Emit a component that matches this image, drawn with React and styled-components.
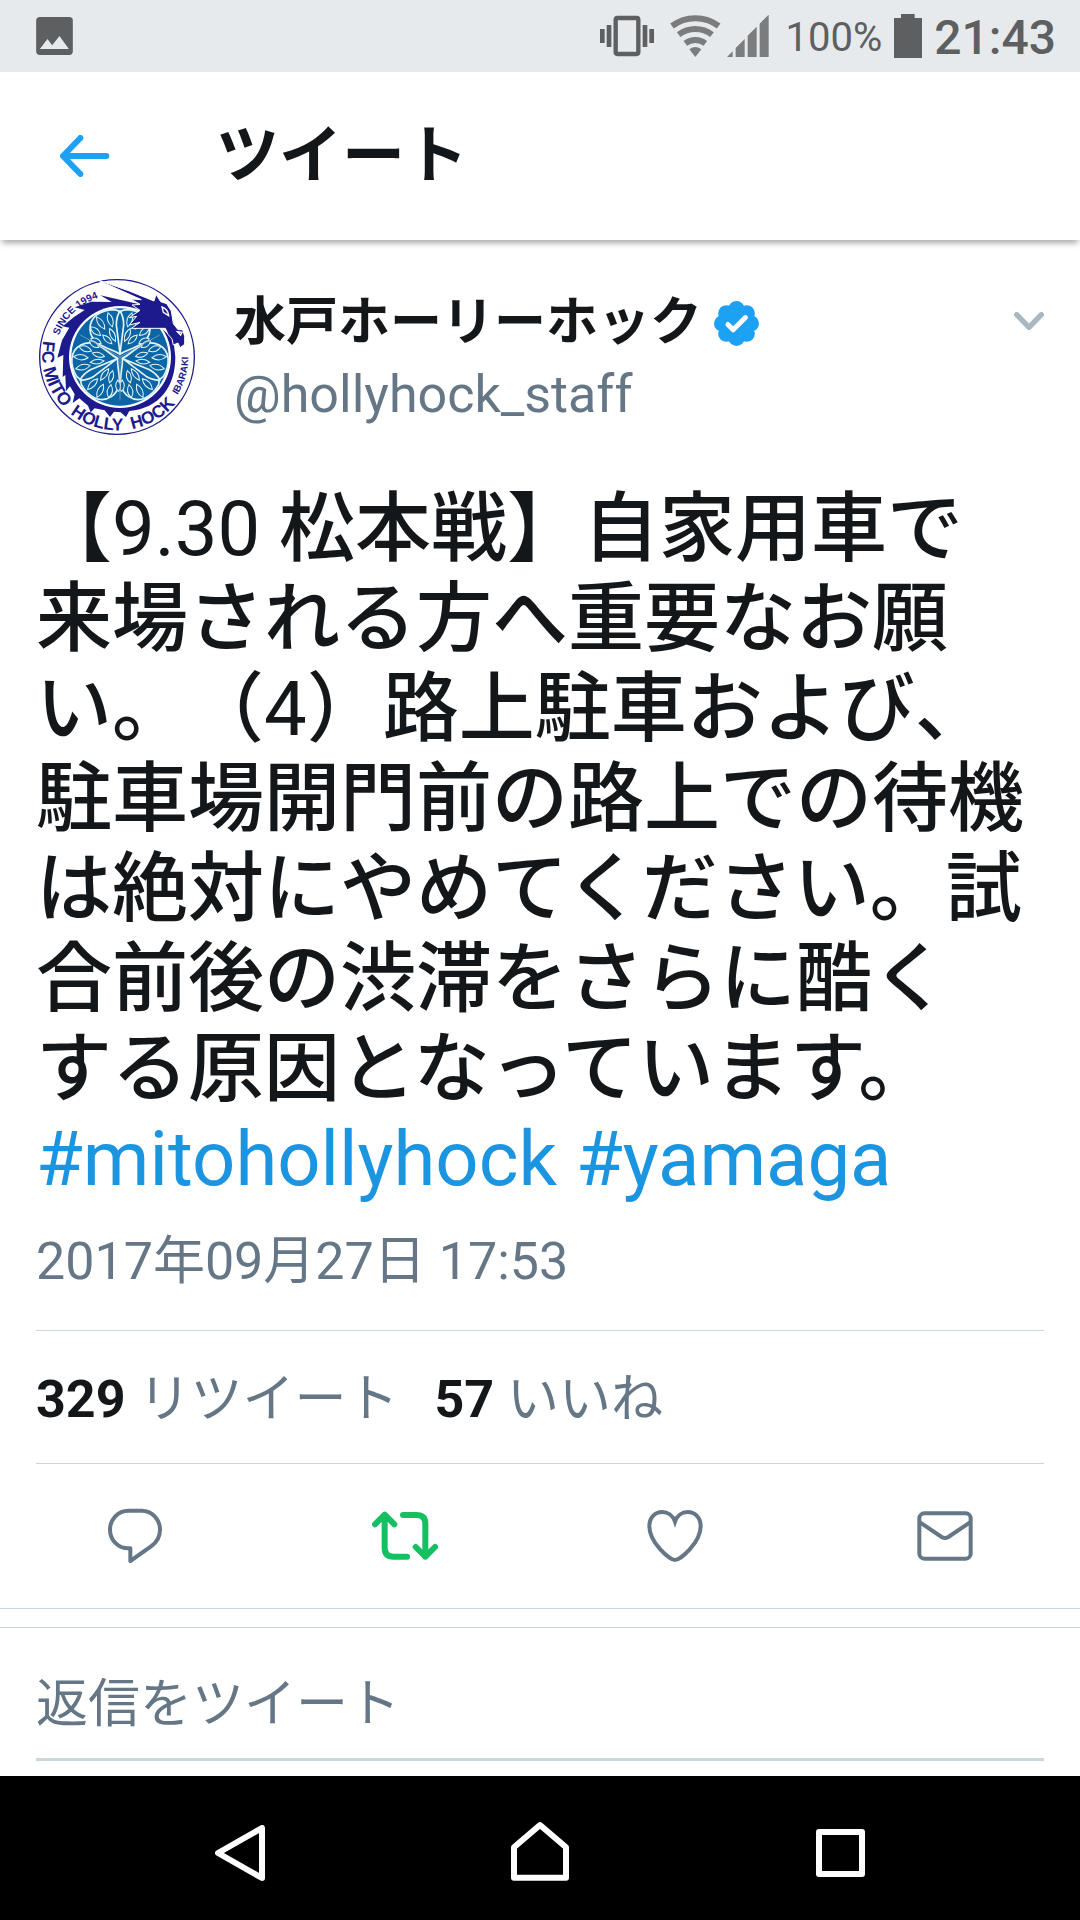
import React from 'react';
import styled, { createGlobalStyle } from 'styled-components';

const App = () => {
    return (
        <>
            <GlobalStyle />
            <Screen>
                <StatusBar />
                <TopBar>
                    <IconButton type="button" aria-label="戻る">
                        <BackArrow />
                    </IconButton>
                    <h1>ツイート</h1>
                </TopBar>
                <Main>
                    <Tweet />
                    <ReplyBox>
                        <input type="text" aria-label="返信をツイート" placeholder="返信をツイート" />
                    </ReplyBox>
                </Main>
                <SystemNav />
            </Screen>
        </>
    );
};

const StatusBar = () => (
    <StatusWrapper>
        <PhotoIcon />
        <StatusIcons $gap="16px">
            <VibrateIcon />
            <StatusIcons $gap="6px">
                <WifiIcon />
                <SignalIcon />
            </StatusIcons>
            <StatusIcons $gap="12px">
                <BatteryText>100%</BatteryText>
                <BatteryIcon />
                <Clock>21:43</Clock>
            </StatusIcons>
        </StatusIcons>
    </StatusWrapper>
);

const Tweet = () => (
    <article>
        <Author>
            <Crest />
            <div className="names">
                <div className="name">
                    <strong>水戸ホーリーホック</strong>
                    <VerifiedBadge />
                </div>
                <span className="handle">@hollyhock_staff</span>
            </div>
            <IconButton type="button" aria-label="メニュー">
                <Chevron />
            </IconButton>
        </Author>
        <TweetText>
            【9.30 松本戦】自家用車で
            <br />
            来場される方へ重要なお願
            <br />
            い。（4）路上駐車および、
            <br />
            駐車場開門前の路上での待機
            <br />
            は絶対にやめてください。試
            <br />
            合前後の渋滞をさらに酷く
            <br />
            する原因となっています。
            <br />
            <a href="#mitohollyhock">#mitohollyhock</a> <a href="#yamaga">#yamaga</a>
        </TweetText>
        <Timestamp>2017年09月27日 17:53</Timestamp>
        <Stats>
            <a href="#retweets">
                <strong>329</strong> リツイート
            </a>
            <a href="#likes">
                <strong>57</strong> いいね
            </a>
        </Stats>
        <Actions>
            <IconButton type="button" aria-label="返信">
                <ReplyIcon />
            </IconButton>
            <IconButton type="button" aria-label="リツイート">
                <RetweetIcon />
            </IconButton>
            <IconButton type="button" aria-label="いいね">
                <HeartIcon />
            </IconButton>
            <IconButton type="button" aria-label="ダイレクトメッセージ">
                <MailIcon />
            </IconButton>
        </Actions>
    </article>
);

const SystemNav = () => (
    <NavWrapper>
        <IconButton type="button" aria-label="Back">
            <svg width="50" height="56" viewBox="45 75 150 168" {...navStroke}>
                <path d="M186 84V234L54 159Z" />
            </svg>
        </IconButton>
        <IconButton type="button" aria-label="Home">
            <svg width="58" height="64" viewBox="933 64 174 192" {...navStroke}>
                <path d="M942 143L1020 76L1098 143V234H942Z" />
            </svg>
        </IconButton>
        <IconButton type="button" aria-label="Recents">
            <svg width="49" height="48" viewBox="108 87 147 144" {...navStroke}>
                <path d="M117 96H246V222H117Z" />
            </svg>
        </IconButton>
    </NavWrapper>
);

const navStroke = { fill: 'none', stroke: '#fff', strokeWidth: 18, strokeLinejoin: 'round' };

/* icons */

const PhotoIcon = () => (
    <svg width="37" height="38" viewBox="102 51 110 114">
        <rect x="102" y="51" width="110" height="114" rx="11" fill="#5d5f61" />
        <path d="M113 147L136 117L150 136L172 108L200 147Z" fill="#e6eaed" />
    </svg>
);

const VibrateIcon = () => (
    <svg width="54" height="42" viewBox="123 45 162 126" fill="#5d5f61">
        <rect x="170" y="54" width="68" height="108" rx="5" fill="none" stroke="#5d5f61" strokeWidth="13" />
        <path d="M123 87h14v42h-14zM143 75h14v66h-14zM251 75h14v66h-14zM271 87h14v42h-14z" />
    </svg>
);

const WifiIcon = () => (
    <svg width="51" height="42" viewBox="336 48 153 126" fill="none" stroke="#7a7c7e" strokeWidth="18">
        <path d="M342 81A116 116 0 0 1 482 81M362 107A83 83 0 0 1 462 107M382 133A50 50 0 0 1 442 133" />
        <path d="M412 174L394 151A30 30 0 0 1 430 151Z" fill="#7a7c7e" stroke="none" />
    </svg>
);

const SignalIcon = () => (
    <svg width="42" height="42" viewBox="508 48 126 126" fill="#7a7c7e">
        <path d="M508 174L525 157V174ZM534 174V147L561 120V174ZM570 174V110L597 83V174ZM606 174V74L633 47V174Z" />
    </svg>
);

const BatteryIcon = () => (
    <svg width="28" height="44" viewBox="1002 42 84 132" fill="#5d5f61">
        <path d="M1023 42H1064V54H1086V174H1002V54H1023Z" />
    </svg>
);

const BackArrow = () => (
    <svg width="50" height="42" viewBox="174 405 150 126" fill="none" stroke="#1da1f2" strokeWidth="18" strokeLinecap="round" strokeLinejoin="round">
        <path d="M313 468H183M235 414L183 468L235 522" />
    </svg>
);

const Chevron = () => (
    <svg width="30" height="18" viewBox="942 96 90 54" fill="none" stroke="#aab8c2" strokeWidth="16" strokeLinecap="round" strokeLinejoin="round">
        <path d="M950 104L987 142L1024 104" />
    </svg>
);

const VerifiedBadge = () => (
    <svg width="45" height="45" viewBox="-68 -68 136 136" fill="#1da1f2">
        <circle r="52" />
        {[0, 45, 90, 135, 180, 225, 270, 315].map((angle) => (
            <circle key={angle} cy="-43" r="25" transform={`rotate(${angle})`} />
        ))}
        <path d="M-26 3L-10 19L27 -18" fill="none" stroke="#fff" strokeWidth="15" strokeLinecap="round" strokeLinejoin="round" />
    </svg>
);

const actionStroke = { fill: 'none', stroke: '#657786', strokeWidth: 12, strokeLinejoin: 'round' };

const ReplyIcon = () => (
    <svg width="54" height="56" viewBox="84 85 162 168" {...actionStroke}>
        <path d="M145 93H185C216 93 240 119 240 150C240 171 230 188 213 200L151 244V206H145C114 206 90 181 90 150C90 119 114 93 145 93Z" />
    </svg>
);

const RetweetIcon = () => (
    <svg width="66" height="50" viewBox="876 95 198 150" fill="none" stroke="#17bf63" strokeWidth="18" strokeLinecap="round" strokeLinejoin="round">
        <path d="M885 135L914 106L943 135M914 106V206Q914 232 940 232H981" />
        <path d="M969 107H1010Q1036 107 1036 133V232M1007 203L1036 232L1065 203" />
    </svg>
);

const HeartIcon = () => (
    <svg width="56" height="54" viewBox="81 88 168 162" {...actionStroke} strokeLinejoin="miter">
        <path d="M165 241C150 241 88 190 88 140C88 114 105 97 126 97C144 97 159 108 165 126C171 108 186 97 203 97C225 97 242 114 242 140C242 190 180 241 165 241Z" />
    </svg>
);

const MailIcon = () => (
    <svg width="56" height="50" viewBox="890 93 168 150" {...actionStroke}>
        <rect x="897" y="100" width="154" height="136" rx="15" />
        <path d="M899 127L964 171Q974 177 984 171L1049 127" />
    </svg>
);

/* small blades that fill one half of a leaf: angle, inner end, outer end, width */
const blades = [
    [17, 78, 122, 16],
    [34, 82, 126, 16],
    [50, 76, 116, 16],
    [66, 62, 96, 15],
    [24, 34, 76, 14],
    [46, 34, 72, 14],
];

const Leaf = ({ angle }) => (
    <g transform={`translate(302 290) rotate(${angle})`}>
        <path d="M0 -8C-26 -28 -86 -30 -90 -82C-92 -122 -56 -142 -14 -142L0 -136L14 -142C56 -142 92 -122 90 -82C86 -30 26 -28 0 -8Z" />
        {blades.map(([turn, from, to, width]) =>
            [turn, -turn].map((t) => (
                <path
                    key={`${t}-${from}`}
                    transform={`translate(0 -16) rotate(${t})`}
                    d={`M0 ${-from}Q${width} ${-(from + to) / 2} 0 ${-to}Q${-width} ${-(from + to) / 2} 0 ${-from}Z`}
                    strokeWidth="3"
                />
            ))
        )}
        <path d="M0 -10L-11 -96Q-11 -122 0 -138Q11 -122 11 -96Z" />
    </g>
);

const lettering = [
    { word: 'SINCE', ring: 'ring-top', offset: 66, size: 30 },
    { word: '1994', ring: 'ring-top', offset: 168, size: 30 },
    { word: 'FC', ring: 'ring-bottom', offset: 17, size: 52 },
    { word: 'MITO', ring: 'ring-bottom', offset: 102, size: 54 },
    { word: 'HOLLY', ring: 'ring-bottom', offset: 262, size: 52 },
    { word: 'HOCK', ring: 'ring-bottom', offset: 460, size: 52 },
    { word: 'IBARAKI', ring: 'ring-right', offset: 216, size: 29 },
];

const Crest = () => (
    <svg width="158" height="158" viewBox="56 53 474 474" role="img" aria-label="FC MITO HOLLY HOCK">
        <circle cx="293" cy="290" r="232" fill="#fff" stroke="#1c1a8c" strokeWidth="4" />
        {/* dragon body */}
        <path
            d="M370 134L243 105L277 125L216 124L166 141L196 149L164 170L130 198L150 202L128 240L114 292L132 284L131 316L130 350L138 344L140 392L152 378L166 402L160 428L180 414L206 436L214 456L226 444L256 450L272 470L284 454L304 456L320 470L330 452C420 444 468 380 468 290L462 236L400 180Z"
            fill="#1c1a8c"
        />
        <circle cx="302" cy="290" r="153" fill="#fff" />
        <circle cx="302" cy="290" r="146" fill="#0c66a6" />
        <g fill="#0c66a6" stroke="#e3f6f6" strokeWidth="5">
            <Leaf angle={0} />
            <Leaf angle={120} />
            <Leaf angle={240} />
        </g>
        <path d="M302 290L183 224M302 290L421 224M302 290V420" stroke="#9fb4c0" strokeWidth="2" />
        {/* dragon head */}
        <path
            d="M230 57L330 92L404 122L410 102L424 124L442 130L456 152L462 190L476 208L490 208L496 228L496 252L482 262L476 248L462 254L458 236L446 222L438 204H336L362 186L330 194L352 168L330 172L362 150L338 134L362 132L334 116L366 118Z"
            fill="#1c1a8c"
            stroke="#fff"
            strokeWidth="3"
        />
        <path d="M428 140Q446 146 448 166L432 156ZM474 214L488 216L484 224Z" fill="#1c1a8c" stroke="#fff" strokeWidth="4" />
        <defs>
            <path id="ring-top" d="M107 290A186 186 0 0 1 293 104" />
            <path id="ring-bottom" d="M76 224A227 227 0 1 0 518 240" />
            <path id="ring-right" d="M293 504A214 214 0 0 0 507 290V240" />
        </defs>
        <g fill="#1c1a8c" fontFamily="'Liberation Sans', Arial, sans-serif" fontWeight="700">
            {lettering.map(({ word, ring, offset, size }) => (
                <text key={word} fontSize={size}>
                    <textPath href={`#${ring}`} startOffset={offset}>
                        {word}
                    </textPath>
                </text>
            ))}
        </g>
    </svg>
);

/* styles */

const GlobalStyle = createGlobalStyle`
    * {
        box-sizing: border-box;
        margin: 0;
        padding: 0;
    }

    body {
        background: #fff;
        color: #14171a;
        font-family: Roboto, 'Noto Sans CJK JP', sans-serif;
        font-size: 52px;
        line-height: 72px;
        text-spacing-trim: space-all;
    }

    svg {
        display: block;
        flex-shrink: 0;
    }
`;

const Screen = styled.div`
    display: flex;
    flex-direction: column;
    min-height: 100vh;
`;

const StatusWrapper = styled.div`
    display: flex;
    align-items: center;
    justify-content: space-between;
    height: 72px;
    padding: 0 24px 0 36px;
    background: #e6eaed;
    color: #5d5f61;
`;

const StatusIcons = styled.div`
    display: flex;
    align-items: center;
    gap: ${(props) => props.$gap};
`;

const BatteryText = styled.span`
    padding-top: 4px;
    font-size: 40px;
`;

const Clock = styled.span`
    padding-top: 4px;
    font-size: 48px;
    font-weight: 500;
`;

const IconButton = styled.button`
    display: flex;
    align-items: center;
    justify-content: center;
    border: none;
    background: none;
    cursor: pointer;
`;

const TopBar = styled.header`
    display: flex;
    align-items: center;
    gap: 106px;
    height: 168px;
    padding: 0 60px;
    background: #fff;
    box-shadow: 0 5px 6px -2px rgba(0, 0, 0, 0.35);

    h1 {
        font-size: 63px;
        font-weight: 700;
    }
`;

const Main = styled.main`
    flex: 1;
`;

const Author = styled.div`
    display: flex;
    align-items: flex-start;
    gap: 38px;
    padding: 38px 36px 0 38px;

    .names {
        flex: 1;
        padding-top: 9px;
    }

    .name {
        display: flex;
        align-items: center;
        gap: 12px;
    }

    .handle {
        color: #657786;
    }

    button {
        padding-top: 34px;
    }
`;

const TweetText = styled.p`
    padding: 48px 36px 0;
    font-family: Roboto, 'Noto Sans CJK JP Medium', 'Noto Sans CJK JP', sans-serif;
    font-size: 76px;
    line-height: 90px;
    white-space: nowrap;

    a {
        color: #1b95e0;
        text-decoration: none;
    }
`;

const Timestamp = styled.p`
    margin: 0 36px;
    padding: 22px 0 32px;
    border-bottom: 1px solid #ccd6dd;
    color: #657786;
`;

const Stats = styled.div`
    display: flex;
    gap: 36px;
    margin: 0 36px;
    padding: 33px 0 27px;
    border-bottom: 1px solid #ccd6dd;

    a {
        color: #657786;
        text-decoration: none;
    }

    strong {
        color: #14171a;
    }
`;

const Actions = styled.div`
    display: grid;
    grid-template-columns: repeat(4, 1fr);
    height: 145px;
    border-bottom: 1px solid #ccd6dd;
`;

const ReplyBox = styled.div`
    margin-top: 18px;
    padding: 36px 36px 15px;
    border-top: 1px solid #ccd6dd;

    input {
        display: block;
        width: 100%;
        height: 97px;
        padding-bottom: 14px;
        border: none;
        border-bottom: 3px solid #ccd6dd;
        background: none;
        color: #14171a;
        font: inherit;
        outline: none;
    }

    input::placeholder {
        color: #657786;
        opacity: 1;
    }
`;

const NavWrapper = styled.nav`
    display: grid;
    grid-template-columns: repeat(3, 300px);
    justify-content: center;
    height: 144px;
    padding-top: 10px;
    background: #000;
`;

export default App;
